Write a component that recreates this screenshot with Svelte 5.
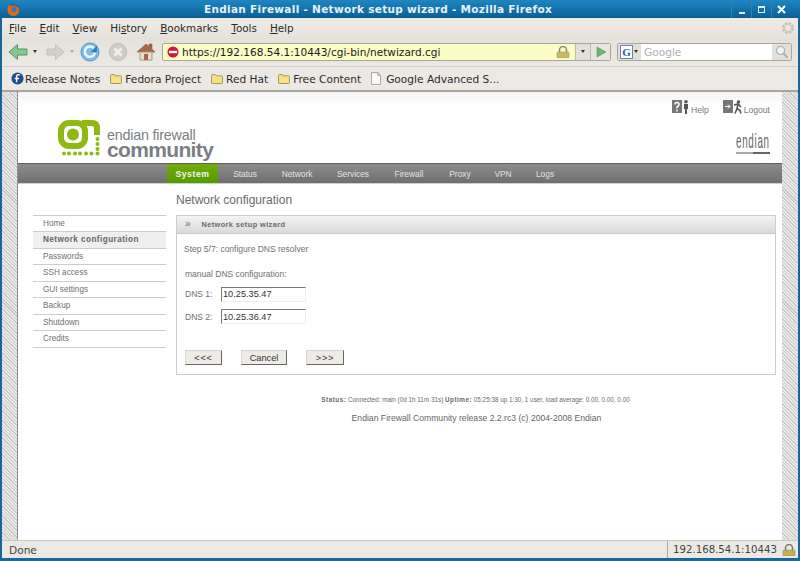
<script>
  const menus = [
    { before: "", key: "F", after: "ile" },
    { before: "", key: "E", after: "dit" },
    { before: "", key: "V", after: "iew" },
    { before: "Hi", key: "s", after: "tory" },
    { before: "", key: "B", after: "ookmarks" },
    { before: "", key: "T", after: "ools" },
    { before: "", key: "H", after: "elp" },
  ];
  const tabs = [
    { name: "Status", width: 52 },
    { name: "Network", width: 52 },
    { name: "Services", width: 60 },
    { name: "Firewall", width: 52 },
    { name: "Proxy", width: 50 },
    { name: "VPN", width: 36 },
    { name: "Logs", width: 48 },
  ];
  const sideLinks = ["Home", "Network configuration", "Passwords", "SSH access", "GUI settings", "Backup", "Shutdown", "Credits"];
  const dns = [
    { label: "DNS 1:", value: "10.25.35.47" },
    { label: "DNS 2:", value: "10.25.36.47" },
  ];
</script>

<div class="window">
  <div class="titlebar">
    <svg class="fox" width="15" height="15" viewBox="0 0 15 15">
      <circle cx="7.5" cy="7.5" r="6" fill="#3f5f95" />
      <path d="M3 2.5c2 1 1 2 3 1.5 3-1 6 .5 7 3 1 4-2 7-5.500 7C4 14 1.500 11 1.500 8c0-2 .5-4 1.500-5.500z" fill="#d96a1c" />
      <circle cx="8" cy="7.500" r="2.500" fill="#4a6ea8" />
    </svg>
    <div class="title">Endian Firewall - Network setup wizard - Mozilla Firefox</div>
    <div class="winbtns">
      <span class="wb"><i class="min"></i></span>
      <span class="wb"><i class="max"></i></span>
      <span class="wb close">
        <svg width="9" height="9" viewBox="0 0 9 9"><path d="M1 1l7 7M8 1L1 8" stroke="#fff" stroke-width="2" /></svg>
      </span>
    </div>
  </div>

  <div class="inner">
    <div class="menubar">
      {#each menus as m}
        <span class="menu">{m.before}<u>{m.key}</u>{m.after}</span>
      {/each}
      <svg class="throbber" width="14" height="14" viewBox="0 0 14 14">
        <circle cx="7" cy="7" r="4.500" fill="none" stroke="#c4c1ba" stroke-width="3" stroke-dasharray="2.500 1" />
      </svg>
    </div>

    <div class="navbar">
      <svg width="20" height="18" viewBox="0 0 20 18" class="back">
        <path d="M1 9l8.500-7.500V6H19v6H9.500v4.500z" fill="#84c790" stroke="#4f9a5c" />
      </svg>
      <span class="drop dark"></span>
      <svg width="20" height="18" viewBox="0 0 20 18" class="fwd">
        <path d="M19 9l-8.500-7.500V6H2v6h8.500v4.500z" fill="#d2d0cc" stroke="#c4c2bd" />
      </svg>
      <span class="drop"></span>
      <svg width="20" height="20" viewBox="0 0 20 20" class="reload">
        <circle cx="10" cy="10" r="9" fill="#7dbde9" stroke="#4a97d2" />
        <path d="M14.500 7A5.200 5.200 0 1 0 15 11" fill="none" stroke="#eef7fd" stroke-width="2.500" />
        <path d="M17 3v7h-6z" fill="#2f7fc4" />
      </svg>
      <svg width="20" height="20" viewBox="0 0 20 20" class="stop">
        <circle cx="10" cy="10" r="8.500" fill="#d0cec9" stroke="#bcbab5" />
        <path d="M6.500 6.500l7 7M13.500 6.500l-7 7" stroke="#f1f0ed" stroke-width="2.500" />
      </svg>
      <svg width="20" height="20" viewBox="0 0 20 20" class="home">
        <path d="M1 10l9-8 3 2.500V2h3v5l3 3z" fill="#a8674a" stroke="#85533f" stroke-width=".5" />
        <path d="M4 10h12v8H4z" fill="#e9dcc4" stroke="#a59a86" />
        <path d="M8 12h4v6H8z" fill="#a8674a" />
      </svg>
      <div class="urlbar">
        <svg width="12" height="12" viewBox="0 0 12 12">
          <circle cx="6" cy="6" r="5.500" fill="#d0183c" />
          <rect x="2" y="4.800" width="8" height="2.400" fill="#fff" />
        </svg>
        <span class="url">https://192.168.54.1:10443/cgi-bin/netwizard.cgi</span>
        <svg class="lock" width="14" height="12" viewBox="0 0 14 12">
          <path d="M3.500 6V4a3.500 3.500 0 0 1 7 0v2" fill="none" stroke="#8a8a80" stroke-width="1.500" />
          <rect x="1" y="6" width="12" height="6" rx="1" fill="#c9b864" stroke="#99916a" stroke-width=".5" />
        </svg>
        <span class="urldrop"><span class="drop dark"></span></span>
        <span class="go">
          <svg width="12" height="12" viewBox="0 0 12 12"><path d="M2 1l9 5-9 5z" fill="#6cb56e" stroke="#4f9a5c" stroke-width=".6" /></svg>
        </span>
      </div>
      <div class="search">
        <span class="engine"><b>G</b><span class="drop dark"></span></span>
        <span class="placeholder">Google</span>
        <span class="glass">
          <svg width="14" height="14" viewBox="0 0 14 14">
            <circle cx="5.500" cy="5.500" r="4" fill="#eef2f5" stroke="#a9aeb2" stroke-width="1.200" />
            <path d="M8.500 8.500l4 4" stroke="#a9aeb2" stroke-width="1.800" />
          </svg>
        </span>
      </div>
    </div>

    <div class="bookmarks">
      <span class="bm">
        <svg width="13" height="13" viewBox="0 0 14 14">
          <circle cx="7" cy="7" r="6.500" fill="#1f4f8f" />
          <path d="M9.500 3H8C6.800 3 6 3.800 6 5v6M4 7h4.500" fill="none" stroke="#fff" stroke-width="1.500" />
        </svg>
        Release Notes
      </span>
      {#each ["Fedora Project", "Red Hat", "Free Content"] as folder}
        <span class="bm folder">
          <svg width="12" height="10" viewBox="0 0 13 11">
            <path d="M.5 2.500V1.500q0-1 1-1h3l1 1.500h6q1 0 1 1v7q0 .5-1 .5h-10q-1 0-1-.5z" fill="#f6e27f" stroke="#9b8f62" />
          </svg>
          {folder}
        </span>
      {/each}
      <span class="bm doc">
        <svg width="10" height="13" viewBox="0 0 11 14">
          <path d="M.5.500h7l3 3v10H.500z" fill="#fbfbfb" stroke="#9c9c9c" />
          <path d="M7.500.500v3h3" fill="none" stroke="#9c9c9c" />
        </svg>
        Google Advanced S...
      </span>
    </div>

    <div class="viewport">
      <div class="hatch"></div>
      <div class="page">
        <header class="head">
          <div class="logo">
            <svg width="42" height="36" viewBox="0 0 42 36">
              <rect x="3" y="3" width="24" height="23" rx="8" fill="none" stroke="#8fb814" stroke-width="6" />
              <path d="M24 3h10q5 0 5 5v7" fill="none" stroke="#8fb814" stroke-width="6" />
              <circle cx="15" cy="14.500" r="6" fill="#8fb814" />
              <g fill="#8fb814">
                <circle cx="39.500" cy="19" r="2" /><circle cx="39.500" cy="24" r="2" /><circle cx="39.500" cy="29" r="2" />
                <circle cx="39.500" cy="33.500" r="2" /><circle cx="33.500" cy="33.500" r="2" /><circle cx="28" cy="33.500" r="2" />
                <circle cx="22" cy="33.500" r="2" /><circle cx="17" cy="33.500" r="2" /><circle cx="11" cy="33.500" r="2" /><circle cx="6" cy="33.500" r="2" />
              </g>
            </svg>
            <div class="logotext">
              <span class="lt1">endian firewall</span>
              <span class="lt2">community</span>
            </div>
          </div>
          <div class="headright">
            <div class="tools">
              <span class="tool">
                <svg width="18" height="14" viewBox="0 0 18 14">
                  <rect width="10" height="13" fill="#777" />
                  <path d="M3 4.500Q3 2.500 5 2.500T7 4.500Q7 6 5 7V8.500" fill="none" stroke="#fff" stroke-width="1.500" />
                  <rect x="4.200" y="9.800" width="1.600" height="1.600" fill="#fff" />
                  <circle cx="14" cy="1.800" r="1.800" fill="#555" />
                  <path d="M12 4h4v5h-1v5h-2V9h-1z" fill="#555" />
                </svg>
                <span>Help</span>
              </span>
              <span class="tool">
                <svg width="20" height="14" viewBox="0 0 20 14">
                  <rect width="10" height="13" fill="#777" />
                  <path d="M2 6.500h5M5 4.500l2 2-2 2" fill="none" stroke="#fff" stroke-width="1" />
                  <circle cx="15.500" cy="2" r="1.800" fill="#555" />
                  <path d="M11 5l4-1 3 3M15 4.500l-1 4 3 2 1 3M14 8.500l-2 5" fill="none" stroke="#555" stroke-width="1.600" />
                </svg>
                <span>Logout</span>
              </span>
            </div>
            <div class="brand">
              <span>endian</span>
              <i></i>
            </div>
          </div>
        </header>

        <nav class="tabs">
          <span class="tab active">System</span>
          {#each tabs as t}
            <span class="tab" style="width: {t.width}px">{t.name}</span>
          {/each}
        </nav>

        <div class="body">
          <aside class="side">
            {#each sideLinks as link, i}
              <div class="link" class:current={i === 1}>{link}</div>
            {/each}
          </aside>
          <main class="main">
            <h1>Network configuration</h1>
            <section class="panel">
              <div class="panelhead"><span class="arrows">»</span> Network setup wizard</div>
              <div class="panelbody">
                <p class="step">Step 5/7: configure DNS resolver</p>
                <p class="manual">manual DNS configuration:</p>
                {#each dns as d}
                  <div class="field">
                    <label for={d.label}>{d.label}</label>
                    <input id={d.label} value={d.value} />
                  </div>
                {/each}
                <div class="buttons">
                  <button class="b1">&lt;&lt;&lt;</button>
                  <button class="b2">Cancel</button>
                  <button class="b3">&gt;&gt;&gt;</button>
                </div>
              </div>
            </section>
          </main>
        </div>

        <footer class="foot">
          <p class="status"><b>Status:</b> Connected: main (0d 1h 11m 31s) <b>Uptime:</b> 05:25:38 up 1:30, 1 user, load average: 0.00, 0.00, 0.00</p>
          <p class="release">Endian Firewall Community release 2.2.rc3 (c) 2004-2008 Endian</p>
        </footer>
      </div>
      <div class="hatch right"></div>
    </div>

    <div class="statusbar">
      <span class="done">Done</span>
      <span class="host">192.168.54.1:10443</span>
      <span class="hostlock">
        <svg width="14" height="12" viewBox="0 0 14 12">
          <path d="M3.500 6V4a3.500 3.500 0 0 1 7 0v2" fill="none" stroke="#77776f" stroke-width="1.500" />
          <rect x="1" y="6" width="12" height="6" rx="1" fill="#c4b050" stroke="#85805c" stroke-width=".5" />
        </svg>
      </span>
    </div>
  </div>
</div>

<style>
  :global(body) {
    margin: 0;
    background: #0f6a9e;
  }
  .window {
    width: 800px;
    height: 561px;
    overflow: hidden;
    display: flex;
    flex-direction: column;
    font-family: "DejaVu Sans", sans-serif;
    font-size: 12px;
    color: #2b2b2b;
    background: #14689c;
    box-sizing: border-box;
    padding: 0 2px 3px 2px;
  }
  .titlebar {
    height: 18px;
    margin: 0 -2px;
    padding: 0 3px 0 6px;
    display: flex;
    align-items: center;
    background: linear-gradient(#1e86c2, #0b5f95);
    flex: none;
  }
  .fox { flex: none; }
  .title {
    flex: 1;
    text-align: center;
    color: #e8f1f6;
    font-weight: bold;
    font-size: 10.5px;
    letter-spacing: 0.3px;
    padding-left: 4px;
  }
  .winbtns { display: flex; gap: 0; margin-right: 6px; }
  .wb {
    width: 20px;
    height: 17px;
    display: flex;
    align-items: center;
    justify-content: center;
    border-left: 1px solid #2f7fb0;
    box-sizing: border-box;
  }
  .min { width: 6px; height: 2px; background: #e6eef3; margin-top: 7px; }
  .max { width: 5px; height: 4px; border: 1px solid #e6eef3; border-top-width: 2px; }
  .inner {
    flex: 1;
    display: flex;
    flex-direction: column;
    background: #eeebe6;
    min-height: 0;
  }
  .menubar {
    height: 19px;
    flex: none;
    display: flex;
    align-items: center;
    gap: 13px;
    padding-left: 7px;
    background: linear-gradient(#efece7, #e6e3dc);
    position: relative;
  }
  .menu { font-size: 10.4px; }
  .throbber { position: absolute; right: 3px; top: 3px; }
  .navbar {
    height: 30px;
    flex: none;
    display: flex;
    align-items: center;
    padding-left: 6px;
    background: linear-gradient(#e4e1da, #ecE9e4);
    border-bottom: 1px solid #d5d2cb;
    box-sizing: border-box;
  }
  .drop {
    display: inline-block;
    width: 0;
    height: 0;
    border: 2.5px solid transparent;
    border-top: 3px solid #aaa8a3;
    border-bottom: 0;
  }
  .drop.dark { border-top-color: #333; }
  .back { flex: none; }
  .fwd { margin-left: 8px; }
  .navbar > .drop { margin-left: 5px; }
  .reload { margin-left: 6px; }
  .stop { margin-left: 8px; }
  .home { margin-left: 8px; }
  .urlbar {
    margin-left: 6px;
    width: 449px;
    height: 18px;
    display: flex;
    align-items: center;
    padding-left: 4px;
    box-sizing: border-box;
    background: #fbfbc6;
    border: 1px solid #a9a69e;
    border-radius: 2px;
  }
  .url {
    flex: 1;
    margin-left: 3px;
    font-size: 10.55px;
    color: #1c1c1c;
    white-space: nowrap;
  }
  .urldrop {
    width: 14px;
    height: 16px;
    margin-left: 5px;
    display: flex;
    align-items: center;
    justify-content: center;
    background: #e3e0d9;
    border-left: 1px solid #bdbab2;
  }
  .go {
    width: 19px;
    height: 16px;
    display: flex;
    align-items: center;
    justify-content: center;
    background: #e8e5df;
    border-left: 1px solid #bdbab2;
  }
  .search {
    margin-left: 6px;
    width: 175px;
    height: 18px;
    display: flex;
    align-items: center;
    box-sizing: border-box;
    background: #fff;
    border: 1px solid #a9a69e;
    border-radius: 2px;
  }
  .engine {
    width: 23px;
    height: 16px;
    background: #e3e0d9;
    display: flex;
    align-items: center;
    gap: 1px;
    padding-left: 2px;
    box-sizing: border-box;
  }
  .engine b {
    width: 11px;
    height: 12px;
    display: flex;
    align-items: center;
    justify-content: center;
    background: #fff;
    border: 1px solid #6a85b5;
    color: #2a55c0;
    font: bold 11px "Liberation Serif", serif;
  }
  .placeholder { flex: 1; color: #b0b0b0; font-size: 10.6px; margin-left: 3px; }
  .glass {
    width: 19px;
    height: 16px;
    background: #e3e0d9;
    display: flex;
    align-items: center;
    justify-content: center;
  }
  .bookmarks {
    height: 25px;
    flex: none;
    display: flex;
    align-items: center;
    gap: 10px;
    padding-left: 9px;
    box-sizing: border-box;
    background: #ecE9e4;
    border-bottom: 2px solid #a8a59e;
    font-size: 10.6px;
  }
  .bm { display: inline-flex; align-items: center; gap: 1px; white-space: nowrap; }
  .folder { gap: 3px; }
  .doc { gap: 5px; }
  .viewport {
    flex: 1;
    display: flex;
    min-height: 0;
  }
  .hatch {
    width: 15px;
    flex: none;
    background: repeating-linear-gradient(45deg, #c9c9c9 0 1px, #e9e9e9 1px 2.4px);
    border-right: 1px solid #8f8f8f;
  }
  .hatch.right { border-right: 0; width: 16px; }
  .page {
    flex: 1;
    min-width: 0;
    background: #fff;
    display: flex;
    flex-direction: column;
    font-family: "Liberation Sans", sans-serif;
    color: #666;
  }
  .head {
    height: 71px;
    flex: none;
    display: flex;
    justify-content: space-between;
    background: linear-gradient(#f3f3f3, #fff 14px);
  }
  .logo {
    margin: 28px 0 0 40px;
    display: flex;
    align-items: flex-start;
  }
  .logotext {
    display: flex;
    flex-direction: column;
    margin: 9px 0 0 7px;
    color: #7b7e83;
    line-height: 1;
  }
  .lt1 { font-size: 14.3px; letter-spacing: -0.2px; height: 12px; line-height: 12px; }
  .lt2 { font-size: 21px; font-weight: bold; letter-spacing: -0.65px; line-height: 17px; }
  .headright {
    display: flex;
    flex-direction: column;
    align-items: flex-end;
    padding: 8px 12px 0 0;
  }
  .tools { display: flex; gap: 14px; font-size: 8.6px; color: #777; }
  .tool { display: flex; align-items: flex-start; gap: 1px; }
  .tool span { margin-top: 5px; }
  .brand {
    margin-top: 21px;
    display: flex;
    flex-direction: column;
    color: #666;
    width: 34px;
  }
  .brand span {
    font-size: 17px;
    line-height: 14px;
    height: 14px;
    letter-spacing: 1.2px;
    transform: scale(.58, 1.2);
    transform-origin: left bottom;
    white-space: nowrap;
  }
  .brand i {
    display: block;
    width: 34px;
    height: 2px;
    margin-top: 2px;
    background: linear-gradient(90deg, #aaa 50%, #666 50%);
  }
  .tabs {
    height: 21px;
    flex: none;
    display: flex;
    padding-left: 149px;
    background: linear-gradient(#8c8c8c, #6f6f6f);
    border-top: 1px solid #5f5f5f;
    box-sizing: border-box;
    border-bottom: 1px solid #d0d0d0;
    font-size: 8.4px;
  }
  .tab {
    display: flex;
    align-items: center;
    justify-content: center;
    color: #e2e2e2;
    height: 100%;
  }
  .tab.active {
    width: 51px;
    background: linear-gradient(#72ad0c, #549a00);
    color: #f2f6e6;
    font-weight: bold;
    letter-spacing: 0.55px;
    font-size: 8.7px;
    margin-right: 1px;
  }
  .body {
    display: flex;
    flex: none;
    height: 191px;
    padding-left: 15px;
    padding-top: 7px;
    box-sizing: border-box;
  }
  .side {
    width: 133px;
    margin-top: 24px;
    margin-right: 10px;
    border-top: 1px solid #ccc;
    font-size: 8.2px;
    flex: none;
    align-self: flex-start;
  }
  .link {
    height: 15.45px;
    line-height: 16.5px;
    padding-left: 10px;
    border-bottom: 1px solid #ccc;
    color: #6f6f6f;
  }
  .link.current {
    background: #efefef;
    font-weight: bold;
    letter-spacing: 0.43px;
    color: #666;
  }
  .main { width: 600px; flex: none; }
  h1 {
    margin: 0;
    height: 24px;
    font-size: 12px;
    font-weight: normal;
    color: #6a6a6a;
    line-height: 18px;
  }
  .panel {
    height: 160px;
    border: 1px solid #ccc;
    box-sizing: border-box;
  }
  .panelhead {
    height: 17px;
    line-height: 16px;
    padding-left: 8px;
    background: linear-gradient(#f4f4f4, #d9d9d9);
    border-bottom: 1px solid #ccc;
    font-size: 7.4px;
    font-weight: bold;
    letter-spacing: 0.4px;
    color: #6b6b6b;
  }
  .arrows { margin-right: 8px; font-size: 10px; font-weight: normal; }
  .panelbody { padding: 8px 0 0 7px; font-size: 8.5px; color: #6f6f6f; }
  p { margin: 0; }
  .step { height: 25px; line-height: 14px; }
  .manual { height: 14px; line-height: 14px; margin-left: 1px; margin-bottom: 2px; }
  .field { display: flex; align-items: center; height: 22.500px; margin-left: 1px; }
  .field label { width: 36px; }
  input {
    width: 85px;
    height: 15px;
    box-sizing: border-box;
    padding: 0 0 0 1px;
    border: 1px solid #eee;
    border-top: 1px solid #777;
    border-left: 1px solid #777;
    font: 9.2px "Liberation Sans", sans-serif;
    color: #333;
    background: #fff;
    outline: none;
  }
  .buttons { display: flex; margin: 22px 0 0 1px; }
  button {
    height: 15px;
    padding: 0;
    box-sizing: border-box;
    background: #eeebe6;
    border: 1px solid #d8d5cf;
    border-right: 1px solid #666;
    border-bottom: 1px solid #666;
    font: 9.2px "Liberation Sans", sans-serif;
    color: #333;
  }
  .b1 { width: 37px; margin-left: 0; letter-spacing: 0.8px; }
  .b2 { width: 46px; margin-left: 19px; }
  .b3 { width: 38px; margin-left: 19px; letter-spacing: 0.8px; }
  .foot {
    text-align: center;
    padding: 20px 0 0 153px;
    box-sizing: border-box;
    width: 100%;
  }
  .status { font-size: 6.33px; color: #6a6a6a; line-height: 10px; margin-left: -2px; }
  .status b { letter-spacing: 0.5px; }
  .release { font-size: 8.65px; color: #666; margin-top: 8px; line-height: 10px; }
  .statusbar {
    height: 18px;
    flex: none;
    display: flex;
    align-items: center;
    background: #ecE9e4;
    border-top: 1px solid #c9c6bf;
    box-sizing: border-box;
    font-size: 10.6px;
    color: #444;
  }
  .done { flex: 1; padding-left: 7px; }
  .host {
    width: 113px;
    height: 100%;
    line-height: 17px;
    padding-left: 5px;
    box-sizing: border-box;
    border-left: 1px solid #aaa7a0;
    white-space: nowrap;
    font-size: 10.2px;
  }
  .hostlock { width: 18px; display: flex; justify-content: center; box-sizing: border-box; }
</style>
